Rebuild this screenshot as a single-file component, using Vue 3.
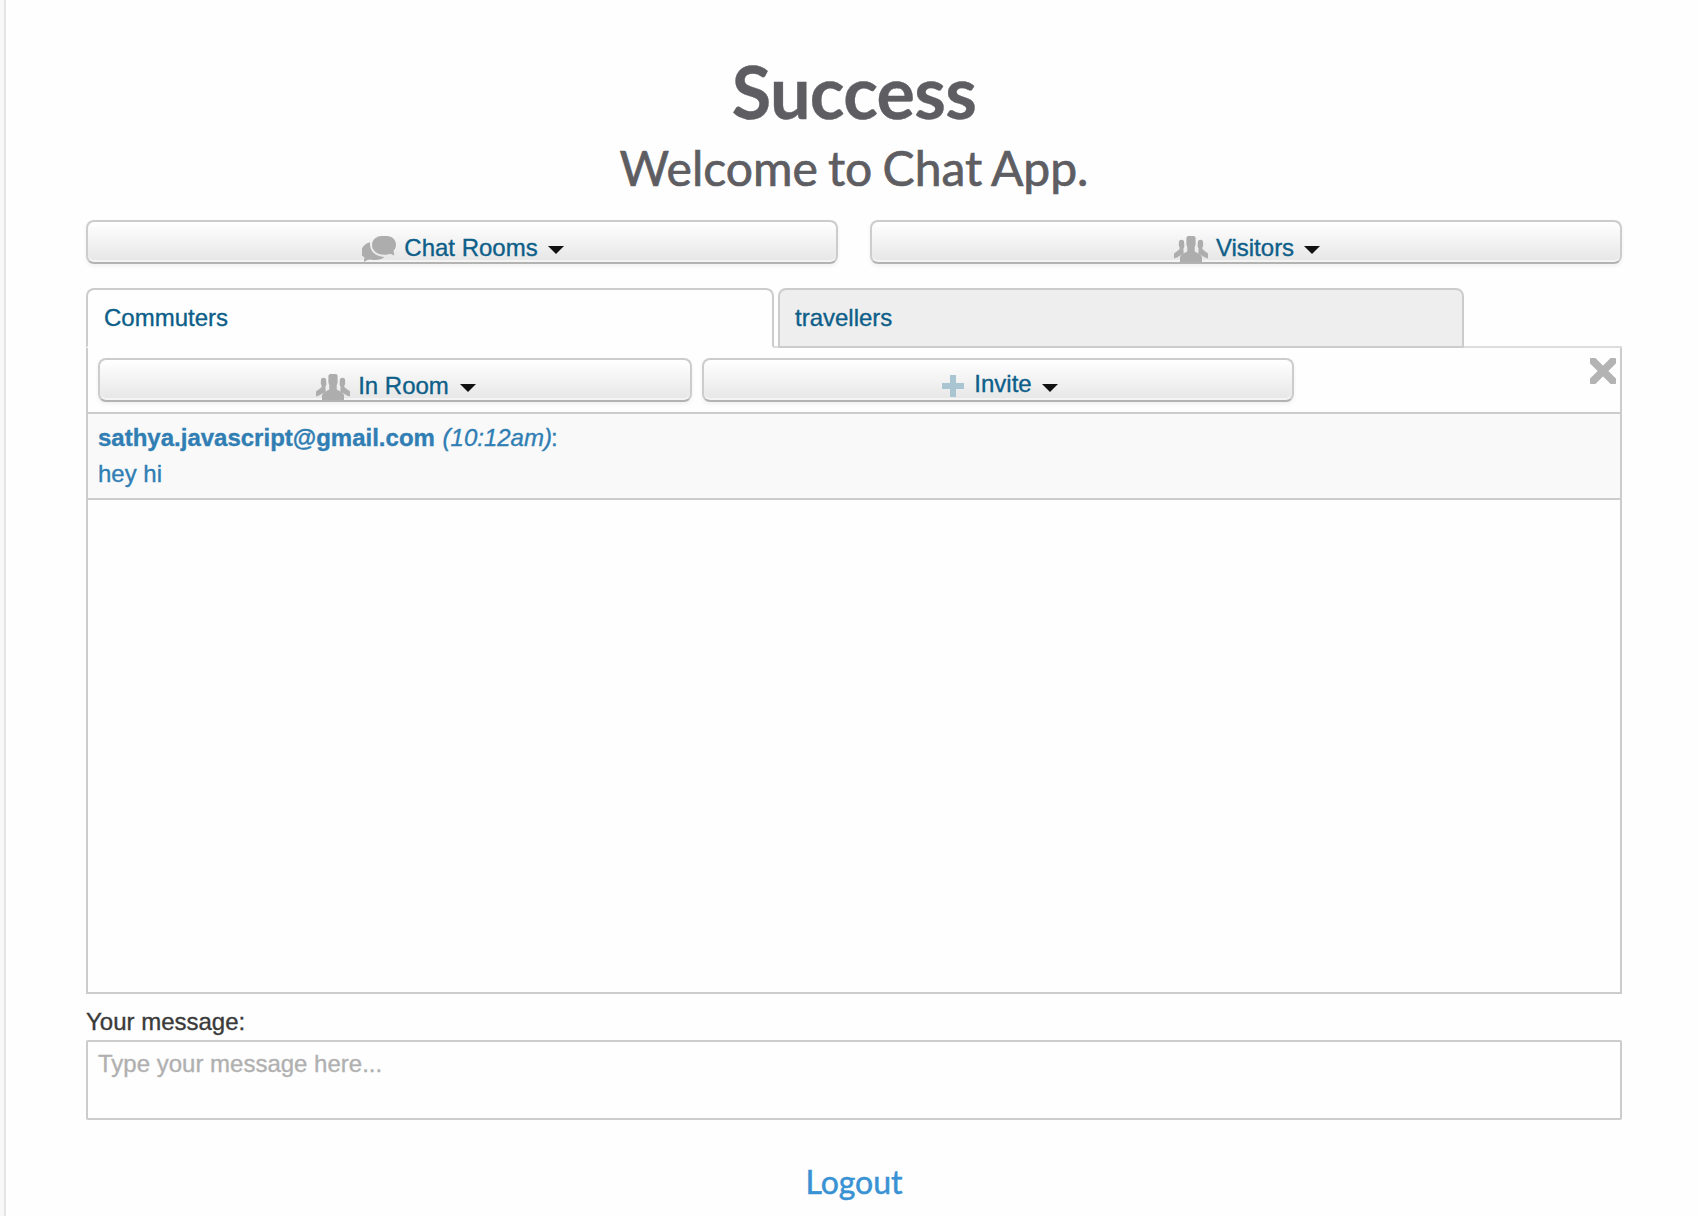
<script setup>
const roomTabs = [
  { name: 'Commuters', active: true },
  { name: 'travellers', active: false },
]
</script>

<template>
  <div class="page">
    <svg class="symbols" width="0" height="0" aria-hidden="true">
      <symbol id="people" viewBox="0 0 34 26">
        <path d="M5 5q2.500-2.600 5 0l.4 5.500-1 2.500.3 4.500L3 21.500 0 22.500v-5l5.500-4.300.2-1.400-.9-2zM29 5q-2.500-2.600-5 0l-.4 5.500 1 2.500-.3 4.500 6.700 4 3 1v-5l-5.500-4.300-.2-1.400.9-2z" />
        <path d="M13.800 0h6.400l1.400 1.600v7l-.9 2.600v4.300l5.600 3 1.700 2.500V26H6v-5l1.700-2.500 5.600-3v-4.300l-.9-2.600v-7z" />
      </symbol>
    </svg>

    <main class="content">
      <h1>Success</h1>
      <h2>Welcome to Chat App.</h2>

      <nav class="menus">
        <button class="btn">
          <svg class="icon" viewBox="0 0 34 26">
            <path d="M19.500 0h5.500c5 0 9 4 9 8.500 0 2.800-1.100 4.800-2.400 6.300l.7 4.700-4-1.700c-2 .8-4 1-6 1-7 0-12.300-4-12.300-9.700C10 4 14 .3 19.500 0z" />
            <path d="M8.200 6.200C7 14.500 13 20.800 22.500 21c-2.500 2.200-6.500 3.400-11 3-2.500-.6-4.500-.7-6 .1L1.800 26l.7-4.400L0 19.500v-7c1.500-3.300 4.500-5.500 8.200-6.300z" />
          </svg>
          <span>Chat Rooms</span><i class="caret"></i>
        </button>
        <button class="btn">
          <svg class="icon"><use href="#people" /></svg>
          <span>Visitors</span><i class="caret"></i>
        </button>
      </nav>

      <div class="tabs">
        <a v-for="tab in roomTabs" :key="tab.name" class="tab" :class="{ active: tab.active }">{{ tab.name }}</a>
      </div>

      <section class="room">
        <div class="toolbar">
          <button class="btn in-room">
            <svg class="icon"><use href="#people" /></svg>
            <span>In Room</span><i class="caret"></i>
          </button>
          <button class="btn invite">
            <svg class="plus" viewBox="0 0 24 24"><path d="M9 1h6v8h8v6h-8v8H9v-8H1V9h8z" /></svg>
            <span>Invite</span><i class="caret"></i>
          </button>
          <svg class="close" viewBox="0 0 26 26"><path d="M3 3l20 20M23 3L3 23" /></svg>
        </div>
        <div class="message">
          <div><b>sathya.javascript@gmail.com</b> <em>(10:12am)</em>:</div>
          <div>hey hi</div>
        </div>
      </section>

      <label class="label" for="msg">Your message:</label>
      <textarea id="msg" placeholder="Type your message here..."></textarea>
      <a class="logout">Logout</a>
    </main>
  </div>
</template>

<style>
body {
  margin: 0;
  background: #fefefe;
  overflow: hidden;
}
</style>

<style scoped>
.page {
  box-sizing: border-box;
  height: 1216px;
  border-left: 4px solid #f8f8f8;
  box-shadow: inset 2px 0 #e5e5e5;
  padding: 0 76px 0 82px;
  font: 24px/36px "Liberation Sans", Arial, sans-serif;
  -webkit-text-stroke-width: .35px;
}
.symbols {
  display: block;
}
.content {
  display: flex;
  flex-direction: column;
}
h1, h2 {
  margin: 0;
  font-family: Lato, sans-serif;
  text-align: center;
  color: #5d5d62;
}
h1 {
  font-size: 72px;
  line-height: 80px;
  padding-top: 51px;
  letter-spacing: -.7px;
}
h2 {
  font-size: 48px;
  font-weight: 400;
  line-height: 60px;
  padding-top: 7px;
  height: 82px;
  word-spacing: -2px;
  -webkit-text-stroke-width: .7px;
}
.menus {
  display: flex;
  gap: 32px;
}
.btn {
  box-sizing: border-box;
  flex: 1;
  display: flex;
  justify-content: center;
  align-items: flex-start;
  height: 44px;
  padding: 8px 0 0 2px;
  border: 2px solid #ccc;
  border-bottom-color: #b3b3b3;
  border-radius: 8px;
  background: linear-gradient(#fff, #e6e6e6);
  box-shadow: inset 0 2px rgba(255, 255, 255, .2), inset 0 -2px rgba(255, 255, 255, .55), 0 2px 4px rgba(0, 0, 0, .06);
  font: inherit;
  color: #0d5f89;
  -webkit-text-stroke-width: .35px;
}
.btn span {
  line-height: 36px;
}
.icon {
  width: 34px;
  height: 26px;
  margin: 6px 8px 0 0;
  fill: #adadad;
  filter: blur(.5px);
}
.caret {
  margin: 16px 0 0 10px;
  border: 8px solid transparent;
  border-top-color: #111;
  border-bottom: 0;
}
.tabs {
  display: flex;
  height: 60px;
  margin-top: 24px;
  background: linear-gradient(#ddd, #ddd) bottom / 100% 2px no-repeat;
}
.tab {
  box-sizing: border-box;
  width: 686px;
  padding: 10px 15px;
  border: 2px solid #ccc;
  border-radius: 8px 8px 0 0;
  background: #eee;
  color: #0d5f89;
}
.tab.active {
  width: 688px;
  margin-right: 4px;
  padding-left: 16px;
  border-bottom-color: #fefefe;
  background: #fefefe;
}
.room {
  box-sizing: border-box;
  height: 646px;
  border: 2px solid #ccc;
  border-top: 0;
}
.toolbar {
  display: flex;
  height: 44px;
  padding: 10px 4px 10px 10px;
  border-bottom: 2px solid #ccc;
}
.in-room {
  flex: 0 0 594px;
  margin-right: 10px;
}
.in-room .caret {
  margin-left: 11px;
}
.invite {
  flex: 0 0 592px;
}
.invite span {
  margin-top: -2px;
}
.plus {
  width: 24px;
  height: 24px;
  margin: 6px 9px 0 1px;
  fill: #aac5d2;
}
.close {
  width: 26px;
  height: 26px;
  margin-left: auto;
  stroke: #b3b3b3;
  stroke-width: 7.500;
  stroke-linecap: round;
  filter: blur(.4px);
}
.message {
  height: 84px;
  padding-left: 10px;
  border-bottom: 2px solid #ccc;
  background: #f9f9f9;
  color: #307eb3;
}
.message div:first-child {
  padding-top: 6px;
}
.message em {
  margin-left: 1px;
  margin-right: -1px;
}
.label {
  margin-top: 10px;
  color: #3a3a3a;
}
textarea {
  box-sizing: border-box;
  height: 80px;
  border: 2px solid #ccc;
  border-radius: 2px;
  padding: 4px 10px;
  background: #fefefe;
  font: inherit;
  resize: none;
  -webkit-text-stroke-width: .35px;
}
textarea::placeholder {
  color: #b0b0b0;
}
.logout {
  margin-top: 42px;
  font: 32px/40px Lato, sans-serif;
  text-align: center;
  color: #3892d3;
  -webkit-text-stroke-width: .5px;
}
</style>
